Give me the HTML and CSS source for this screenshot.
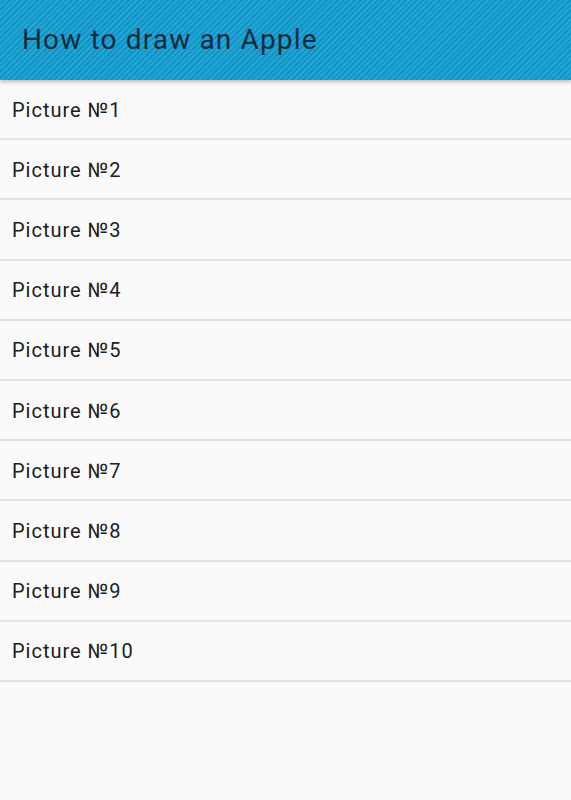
FILE: index.html
```html
<!DOCTYPE html>
<html lang="en">
	<head>
		<meta charset="utf-8" />
		<meta name="viewport" content="width=device-width, initial-scale=1" />
		<title>How to draw an Apple</title>
		<link rel="stylesheet" href="styles.css">
	</head>
	<body>
		<header class="bar">
			<h1>How to draw an Apple</h1>
		</header>
		<ul class="list">
			<li>Picture №1</li>
			<li>Picture №2</li>
			<li>Picture №3</li>
			<li>Picture №4</li>
			<li>Picture №5</li>
			<li>Picture №6</li>
			<li>Picture №7</li>
			<li>Picture №8</li>
			<li>Picture №9</li>
			<li>Picture №10</li>
		</ul>
	</body>
</html>
```

FILE: styles.css
```css
* {
	margin: 0;
	padding: 0;
	box-sizing: border-box;
}

body {
	background: #fafafa;
	font-family: Roboto, "Noto Sans", sans-serif;
	min-height: 100vh;
}

.bar {
	position: relative;
	z-index: 1;
	height: 80px;
	display: flex;
	align-items: center;
	padding-left: 22px;
	background: repeating-linear-gradient(135deg, #20a6d7 0 2px, #1592c4 2px 4px);
	box-shadow: 0 2px 4px rgba(0, 0, 0, 0.25);
}

.bar h1 {
	font-size: 28px;
	font-weight: normal;
	letter-spacing: 1.15px;
	color: #132b3d;
	padding-bottom: 2px;
}

.list {
	list-style: none;
}

.list li {
	height: 60.2px;
	display: flex;
	align-items: center;
	padding-left: 12px;
	padding-top: 1px;
	font-size: 20px;
	letter-spacing: 1px;
	color: #202020;
	border-bottom: 2px solid #e2e2e2;
}
```
